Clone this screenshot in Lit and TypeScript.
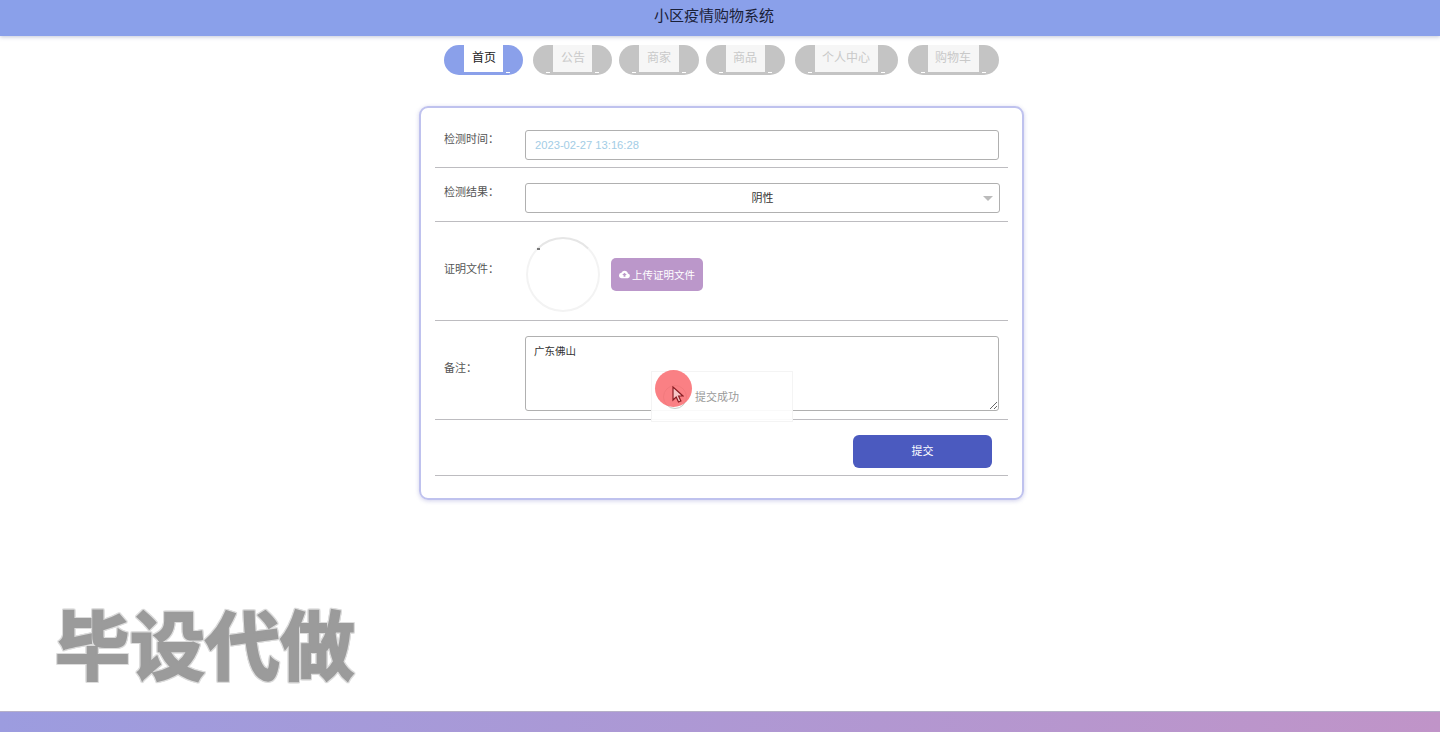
import { LitElement, html, css } from "lit";
import { customElement } from "lit/decorators.js";

const NAV = [
  { label: "首页", active: true, tight: false },
  { label: "公告", active: false, tight: false },
  { label: "商家", active: false, tight: true },
  { label: "商品", active: false, tight: true },
  { label: "个人中心", active: false, tight: false },
  { label: "购物车", active: false, tight: false },
];

@customElement("app-root")
export class AppRoot extends LitElement {
  static styles = css`
    :host {
      display: flex;
      flex-direction: column;
      position: relative;
      height: 732px;
      overflow: hidden;
      background: #fff;
      color: #333;
      font-family: "Liberation Sans", "Noto Sans CJK SC", sans-serif;
    }

    .header {
      height: 36px;
      flex: none;
      box-sizing: border-box;
      padding-right: 12px;
      background: #8aa0ea;
      box-shadow: 0 1px 4px rgba(120, 130, 170, 0.45);
      color: #1a2038;
      font-size: 15px;
      line-height: 32px;
      text-align: center;
    }

    .nav {
      display: flex;
      justify-content: center;
      gap: 10px;
      margin: 9px 0 0 3px;
    }
    .nav-item {
      position: relative;
      display: flex;
      height: 30px;
      padding: 0 20px;
      border-radius: 15px;
      background: #c4c4c4;
      color: #c9c9c9;
      font-size: 12px;
    }
    .nav-item.active {
      background: #8aa0ea;
      color: #222;
    }
    .nav-item.tight {
      margin-left: -3px;
    }
    .nav-item span {
      height: 27px;
      padding: 0 7.5px;
      background: #f6f6f6;
      line-height: 26px;
    }
    .nav-item.active span {
      background: #fff;
    }
    .nav-item::before,
    .nav-item::after {
      content: "";
      position: absolute;
      bottom: 2px;
      width: 4px;
      height: 1px;
      background: #fff;
    }
    .nav-item::before {
      left: 13px;
    }
    .nav-item::after {
      right: 13px;
    }
    .nav-item.active::before {
      display: none;
    }

    .card {
      box-sizing: border-box;
      width: 605px;
      height: 394px;
      margin: 31px 0 0 419px;
      padding: 22px 14px 0;
      border: 2px solid #bfc2ee;
      border-radius: 9px;
      box-shadow: 0 1px 4px rgba(150, 150, 210, 0.45);
    }
    .row {
      display: flex;
      align-items: center;
      margin-bottom: 15px;
      padding: 0 9px 8px;
      border-bottom: 1px solid #bdbcc0;
    }
    .row:first-child {
      padding-bottom: 7px;
    }
    .label {
      flex: none;
      width: 81px;
      padding-bottom: 12px;
      color: #555;
      font-size: 11px;
      line-height: 14px;
    }
    .field {
      box-sizing: border-box;
      display: block;
      width: 475px;
      height: 30px;
      margin: 0;
      padding: 0 9px;
      border: 1px solid #b0b0b0;
      border-radius: 3px;
      outline: none;
      background: #fff;
      font-family: inherit;
      font-size: 11px;
    }
    .field.time {
      color: #a3cde6;
      font-size: 11.2px;
    }
    .select-wrap {
      position: relative;
    }
    .select-wrap::after {
      content: "";
      position: absolute;
      top: 13px;
      right: 7px;
      border: 5px solid transparent;
      border-top-color: #bbb;
      border-bottom: 0;
    }
    select.field {
      appearance: none;
      color: #333;
      text-align: center;
      text-align-last: center;
    }
    textarea.field {
      height: 75px;
      padding: 6px 8px;
      color: #333;
      font-size: 10.5px;
      resize: vertical;
    }

    .proof {
      position: relative;
      flex: none;
      box-sizing: border-box;
      width: 74px;
      height: 75px;
      margin-left: 1px;
      border: 2px solid #f3f3f3;
      border-top-color: #e6e6e6;
      border-radius: 50%;
    }
    .proof::before {
      content: "";
      position: absolute;
      top: 9px;
      left: 9px;
      width: 3px;
      height: 2px;
      background: #777;
    }
    .upload {
      display: flex;
      align-items: center;
      gap: 2px;
      width: 92px;
      height: 33px;
      margin-left: 11px;
      box-sizing: border-box;
      padding-left: 8px;
      border-radius: 5px;
      background: #bb97ca;
      color: #fff;
      font-size: 10.5px;
    }
    .upload svg {
      width: 11px;
      height: 11px;
    }

    .row.actions {
      justify-content: flex-end;
      padding: 0 16px 7px 0;
    }
    .submit {
      width: 139px;
      height: 33px;
      border-radius: 6px;
      background: #4b5abf;
      color: #fff;
      font-size: 11px;
      line-height: 33px;
      text-align: center;
    }

    .footer {
      flex: none;
      height: 21px;
      margin-top: auto;
      border-top: 1px solid #b6b0c8;
      box-sizing: border-box;
      background: linear-gradient(90deg, #9c9cdf, #c094c8);
    }

    .toast {
      position: absolute;
      top: 371px;
      left: 651px;
      box-sizing: border-box;
      width: 142px;
      height: 51px;
      padding: 16px 0 0 43px;
      border: 1px solid #f4f4f4;
      background: rgba(255, 255, 255, 0.92);
      color: #999;
      font-size: 11px;
    }
    .toast::before {
      content: "";
      position: absolute;
      top: 13px;
      left: 11px;
      width: 22px;
      height: 22px;
      border: 1px solid #c4cfc8;
      border-radius: 50%;
    }
    .cursor-dot {
      position: absolute;
      top: 370px;
      left: 655px;
      width: 37px;
      height: 37px;
      border-radius: 50%;
      background: rgba(249, 106, 110, 0.85);
    }
    .cursor-dot svg {
      position: absolute;
      top: 16px;
      left: 17px;
      width: 12px;
      height: 17px;
    }

    .watermark {
      position: absolute;
      top: 598px;
      left: 55px;
      color: #9b9b9b;
      font-size: 75px;
      font-weight: 700;
      line-height: 100px;
      white-space: nowrap;
      -webkit-text-stroke: 2px #9b9b9b;
      filter: drop-shadow(1px 0 0 #dcdcdc) drop-shadow(-1px 0 0 #dcdcdc) drop-shadow(0 1px 0 #dcdcdc)
        drop-shadow(0 -1px 0 #dcdcdc);
    }
  `;

  render() {
    return html`
      <div class="header">小区疫情购物系统</div>
      <div class="nav">
        ${NAV.map(
          (item) => html`
            <div class="nav-item ${item.active ? "active" : ""} ${item.tight ? "tight" : ""}">
              <span>${item.label}</span>
            </div>
          `
        )}
      </div>
      <div class="card">
        <div class="row">
          <div class="label">检测时间：</div>
          <input class="field time" .value=${"2023-02-27 13:16:28"} />
        </div>
        <div class="row">
          <div class="label">检测结果：</div>
          <div class="select-wrap">
            <select class="field"><option>阴性</option></select>
          </div>
        </div>
        <div class="row">
          <div class="label">证明文件：</div>
          <div class="proof"></div>
          <div class="upload">
            <svg viewBox="0 0 24 24" fill="#fff">
              <path
                d="M19.35 10.04A7.49 7.49 0 0 0 12 4a7.5 7.5 0 0 0-6.65 4.04A6 6 0 0 0 6 20h13a5 5 0 0 0 .35-9.96zM14 13v4h-4v-4H7l5-5 5 5h-3z"
              />
            </svg>
            上传证明文件
          </div>
        </div>
        <div class="row">
          <div class="label">备注：</div>
          <textarea class="field" .value=${"广东佛山"}></textarea>
        </div>
        <div class="row actions">
          <div class="submit">提交</div>
        </div>
      </div>
      <div class="footer"></div>

      <div class="toast">提交成功</div>
      <div class="cursor-dot">
        <svg viewBox="0 0 12 17">
          <path d="M1 1v13l3.2-3 2.3 5 2.4-1-2.3-5H11z" fill="#f7c6c6" stroke="#8a1c22" stroke-width="1.2" />
        </svg>
      </div>
      <div class="watermark">毕设代做</div>
    `;
  }
}
